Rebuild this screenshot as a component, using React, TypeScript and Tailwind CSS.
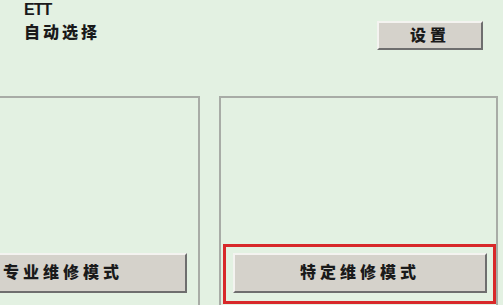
import React from 'react';

const font = { fontFamily: '"Liberation Sans", "Noto Sans CJK SC", sans-serif' };

function ClassicButton({ label, className }: { label: string; className: string }) {
  return (
    <button
      className={`h-[40px] bg-[#d5d2cb] border-t-2 border-l-2 border-t-[#f4f3f0] border-l-[#f4f3f0] border-b-2 border-r-2 border-b-[#6e6e6e] border-r-[#6e6e6e] text-[16px] font-black tracking-[4px] text-[#1a1a1a] ${className}`}
    >
      {label}
    </button>
  );
}

export default function App() {
  return (
    <div className="w-[503px] h-[305px] overflow-hidden bg-[#e3f1e2] text-[#1a1a1a]" style={font}>
      <div className="flex justify-between">
        <div className="pl-[24px] pt-[1px]">
          <div className="text-[16px] leading-[18px] font-bold tracking-[-1px]">ETT</div>
          <div className="mt-[4px] text-[16px] leading-[20px] font-black tracking-[3px]">自动选择</div>
        </div>
        <div className="pt-[21px] pr-[20px]">
          <button className="w-[106px] h-[29px] bg-[#d5d2cb] border-t-2 border-l-2 border-t-[#f4f3f0] border-l-[#f4f3f0] border-b-2 border-r-2 border-b-[#6e6e6e] border-r-[#6e6e6e] text-[16px] font-black tracking-[4px]">
            设置
          </button>
        </div>
      </div>

      <div className="mt-[46px] ml-[-79px] flex gap-[19px]">
        <div className="w-[279px] h-[220px] border-2 border-[#a8aca6] flex flex-col justify-end pb-[21px] pl-[10px]">
          <ClassicButton label="专业维修模式" className="w-[254px] pl-[6px]" />
        </div>
        <div className="w-[279px] h-[220px] border-2 border-[#a8aca6] flex flex-col justify-end pb-[10px] pl-[2px]">
          <div className="w-[273px] h-[60px] border-[3px] border-[#d8282a] pt-[6px] pl-[7px]">
            <ClassicButton label="特定维修模式" className="w-[254px]" />
          </div>
        </div>
      </div>
    </div>
  );
}
